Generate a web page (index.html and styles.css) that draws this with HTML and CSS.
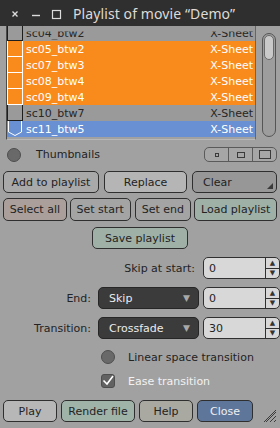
FILE: index.html
```html
<!DOCTYPE html>
<html lang="en">
<head>
    <meta charset="UTF-8">
    <title>Playlist of movie “Demo”</title>
    <link rel="stylesheet" href="styles.css">
</head>
<body>

    <!-- Window title -->
    <div class="titlebar">
        <svg class="tb-icons" width="64" height="26" viewBox="0 0 64 26">
            <path d="M12.5 11.5 L17.5 16.5 M17.5 11.5 L12.5 16.5" stroke="#dcdcdc" stroke-width="1.4"/>
            <path d="M32 15.5 H40" stroke="#dcdcdc" stroke-width="1.4"/>
            <rect x="52.5" y="10.5" width="8" height="8" fill="none" stroke="#dcdcdc" stroke-width="1.2"/>
        </svg>
        <span class="title">Playlist of movie “Demo”</span>
    </div>

    <!-- Clip list -->
    <div class="list-wrap">
        <div class="list">
            <div class="rows">
                <div class="row grey cut"><span class="cell"></span><span class="name">sc04_btw2</span><span class="kind">X-Sheet</span></div>
                <div class="row orange"><span class="cell"></span><span class="name">sc05_btw2</span><span class="kind">X-Sheet</span></div>
                <div class="row orange"><span class="cell"></span><span class="name">sc07_btw3</span><span class="kind">X-Sheet</span></div>
                <div class="row orange"><span class="cell"></span><span class="name">sc08_btw4</span><span class="kind">X-Sheet</span></div>
                <div class="row orange"><span class="cell"></span><span class="name">sc09_btw4</span><span class="kind">X-Sheet</span></div>
                <div class="row grey"><span class="cell"></span><span class="name">sc10_btw7</span><span class="kind">X-Sheet</span></div>
                <div class="row blue">
                    <svg class="tag" width="16" height="16" viewBox="0 0 16 16">
                        <path d="M1.5 0 V11 L8 14.5 L14.5 11 V0" fill="none" stroke="#fff" stroke-width="1"/>
                    </svg>
                    <span class="name">sc11_btw5</span><span class="kind">X-Sheet</span>
                </div>
            </div>
        </div>
        <div class="scroll"><div class="thumb"></div></div>
    </div>

    <!-- Thumbnail options -->
    <div class="opts">
        <span class="radio"></span>
        <span class="opt-label">Thumbnails</span>
        <div class="seg">
            <span class="seg-item"><i class="sq sq-s"></i></span>
            <span class="seg-item"><i class="sq sq-m"></i></span>
            <span class="seg-item"><i class="sq sq-l"></i></span>
        </div>
    </div>

    <!-- Playlist buttons -->
    <div class="btn-row row1">
        <button class="btn b-add">Add to playlist</button>
        <button class="btn b-replace">Replace</button>
        <button class="btn b-clear">Clear</button>
    </div>
    <div class="btn-row row2">
        <button class="btn b-select">Select all</button>
        <button class="btn b-start">Set start</button>
        <button class="btn b-end">Set end</button>
        <button class="btn b-load green">Load playlist</button>
    </div>
    <div class="btn-row row3">
        <button class="btn b-save green">Save playlist</button>
    </div>

    <!-- Settings -->
    <div class="form">
        <label class="lbl lbl-wide">Skip at start:</label>
        <div class="spin"><span class="val">0</span><span class="arrows"><span>▲</span><span>▼</span></span></div>

        <label class="lbl">End:</label>
        <div class="drop"><span>Skip</span><span class="caret">▼</span></div>
        <div class="spin"><span class="val">0</span><span class="arrows"><span>▲</span><span>▼</span></span></div>

        <label class="lbl">Transition:</label>
        <div class="drop"><span>Crossfade</span><span class="caret">▼</span></div>
        <div class="spin"><span class="val">30</span><span class="arrows"><span>▲</span><span>▼</span></span></div>
    </div>

    <div class="checks">
        <div class="check-row">
            <span class="radio"></span>
            <span class="check-label">Linear space transition</span>
        </div>
        <div class="check-row">
            <span class="box">
                <svg width="14" height="14" viewBox="0 0 14 14">
                    <path d="M2.5 6.5 L6 10 L12 2" fill="none" stroke="#fff" stroke-width="1.6"/>
                </svg>
            </span>
            <span class="check-label on">Ease transition</span>
        </div>
    </div>

    <!-- Dialog buttons -->
    <div class="btn-row bottom">
        <button class="btn b-play">Play</button>
        <button class="btn b-render">Render file</button>
        <button class="btn b-help">Help</button>
        <button class="btn b-close">Close</button>
        <svg class="grip" width="14" height="14" viewBox="0 0 14 14">
            <path d="M13 3 L3 13 M13 7 L7 13 M13 11 L11 13 M13 1 L1 13" stroke="#3c3c3c" stroke-width="1"/>
        </svg>
    </div>

</body>
</html>
```

FILE: styles.css
```css
body {
    margin: 0;
    width: 280px;
    height: 428px;
    overflow: hidden;
    background-color: #a1a1a1;
    color: #232323;
    font-family: "DejaVu Sans", Verdana, sans-serif;
    font-size: 11px;
}

/* Title bar */
.titlebar {
    height: 26px;
    display: flex;
    align-items: center;
    background-color: #2f2f2f;
}

.tb-icons {
    flex: none;
}

.title {
    margin-left: 9px;
    color: #dedbd6;
    font-family: "Noto Sans", sans-serif;
    font-size: 14px;
    letter-spacing: 0.1px;
}

/* List */
.list-wrap {
    display: flex;
    padding-left: 6px;
}

.list {
    width: 250px;
    height: 114px;
    box-sizing: border-box;
    overflow: hidden;
    border-left: 1px solid #4a4a4a;
    border-right: 1px solid #56688a;
    border-bottom: 1px solid #b9b9b9;
}

.rows {
    margin-top: -1px;
}

.row {
    height: 16px;
    display: flex;
    align-items: center;
}

/* top row is scrolled half out of view */
.cut .name,
.cut .kind {
    clip-path: inset(5px 0 0 0);
}

.row .cell {
    width: 16px;
    height: 16px;
    box-sizing: border-box;
    border: 1px solid #1e1e1e;
    border-top: none;
    flex: none;
}

.row .tag {
    flex: none;
}

.row .name {
    margin-left: 3px;
}

.row .kind {
    margin-left: auto;
    padding-right: 2px;
}

.grey {
    background-color: #9a9a9a;
    color: #262626;
}

.orange {
    background-color: #f98b1c;
    color: #fff;
}

.orange .cell {
    border-color: #fff;
}

.blue {
    background-color: #6890d2;
    color: #fff;
}

.scroll {
    margin: 7px 0 0 6px;
    width: 14px;
    height: 104px;
    box-sizing: border-box;
    border: 1px solid #555;
    border-radius: 7px;
    background-color: #9d9d9d;
}

.thumb {
    margin: 1px;
    height: 25px;
    box-sizing: border-box;
    border: 1px solid #6a6a6a;
    border-radius: 5px;
    background-color: #c9c9c9;
}

/* Thumbnail options */
.opts {
    display: flex;
    align-items: center;
    margin-top: 7px;
    padding: 0 3px 0 7px;
    height: 15px;
}

.radio {
    width: 14px;
    height: 14px;
    box-sizing: border-box;
    border: 1px solid #4e4e4e;
    border-radius: 50%;
    background-color: #696969;
    flex: none;
}

.opt-label {
    margin-left: 15px;
}

.seg {
    margin-left: auto;
    display: flex;
    height: 15px;
    box-sizing: border-box;
    border: 1px solid #5a5a5a;
    border-radius: 5px;
    background-color: #a6a6a6;
}

.seg-item {
    width: 23px;
    display: flex;
    align-items: center;
    justify-content: center;
    border-left: 1px solid #5a5a5a;
}

.seg-item:first-child {
    border-left: none;
}

.sq {
    display: block;
    border: 1px solid #3a3a3a;
    box-sizing: border-box;
}

.sq-s { width: 4px; height: 4px; }
.sq-m { width: 8px; height: 6px; }
.sq-l { width: 12px; height: 9px; }

/* Buttons */
.btn-row {
    display: flex;
    padding: 0 3px;
}

.btn {
    height: 22px;
    box-sizing: border-box;
    padding: 0;
    border: 1px solid #2f2f2f;
    border-radius: 5px;
    background-color: #a9a9a9;
    color: #232323;
    font-family: "DejaVu Sans", Verdana, sans-serif;
    font-size: 11px;
    position: relative;
}

.row1 {
    margin-top: 9px;
    gap: 5px;
}

.b-add { width: 96px; }
.b-replace { width: 83px; background-color: #b5b5b5; }
.b-clear {
    width: 85px;
    background-color: #979797;
    text-align: left;
    padding-left: 10px;
}

.b-clear::after {
    content: '';
    position: absolute;
    right: 3px;
    bottom: 3px;
    border-left: 6px solid transparent;
    border-bottom: 6px solid #3a3a3a;
}

.row2 {
    margin-top: 5px;
    gap: 3px;
}

.row2 .btn {
    height: 23px;
}

.b-select { width: 64px; background-color: #aa9f9a; }
.b-start { width: 61px; background-color: #a4a4a4; }
.b-end { width: 57px; background-color: #a4a4a4; margin-left: 1px; }
.b-load { width: 83px; }

.green {
    background-color: #9fb0a7;
}

.row3 {
    margin-top: 6px;
    justify-content: center;
}

.b-save { width: 96px; }

/* Settings form */
.form {
    display: grid;
    grid-template-columns: 88px 101px 74px;
    column-gap: 7px;
    row-gap: 8px;
    margin-top: 8px;
    padding-left: 3px;
}

.form .spin {
    margin-left: -3px;
}

.lbl {
    align-self: center;
    text-align: right;
}

.lbl-wide {
    grid-column: 1 / 3;
    padding-right: 4px;
}

.spin {
    height: 22px;
    box-sizing: border-box;
    display: flex;
    border: 1px solid #303030;
    border-radius: 5px;
    background-color: #d8d8d8;
    overflow: hidden;
}

.spin .val {
    flex: 1;
    align-self: center;
    padding-left: 5px;
}

.arrows {
    width: 13px;
    display: flex;
    flex-direction: column;
    border-left: 1px solid #303030;
    font-size: 7px;
    color: #333;
}

.arrows span {
    flex: 1;
    display: flex;
    align-items: center;
    justify-content: center;
}

.arrows span:first-child {
    border-bottom: 1px solid #303030;
}

.drop {
    height: 22px;
    box-sizing: border-box;
    display: flex;
    align-items: center;
    justify-content: space-between;
    padding: 0 8px 0 10px;
    border: 1px solid #262626;
    border-radius: 5px;
    background-color: #3b3b3b;
    color: #ececec;
}

.caret {
    color: #a8a8a8;
    font-size: 9px;
}

/* Checkboxes */
.checks {
    margin-top: 11px;
    padding-left: 101px;
    display: flex;
    flex-direction: column;
    gap: 10px;
}

.check-row {
    display: flex;
    align-items: center;
    height: 14px;
}

.check-label {
    margin-left: 13px;
}

.check-label.on {
    color: #f2f2f2;
}

.box {
    width: 14px;
    height: 14px;
    box-sizing: border-box;
    border: 1px solid #4e4e4e;
    border-radius: 3px;
    background-color: #626262;
    display: flex;
}

.box svg {
    margin: -1px;
}

/* Dialog buttons */
.bottom {
    margin-top: 12px;
    gap: 4px;
}

.b-play { width: 54px; background-color: #b7b7b7; }
.b-render { width: 74px; background-color: #9fb3a9; }
.b-help { width: 54px; background-color: #aaa9a1; }
.b-close { width: 56px; background-color: #5e7699; color: #eef0f4; }

.grip {
    margin: 9px 0 0 auto;
}
```
